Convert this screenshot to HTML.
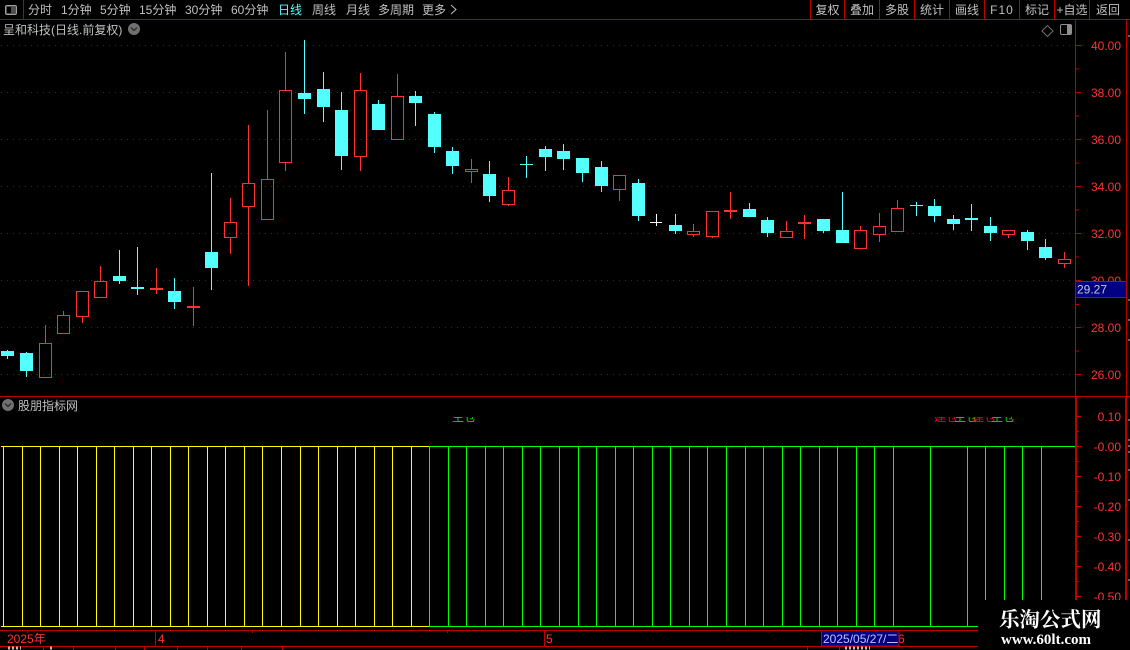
<!DOCTYPE html>
<html><head><meta charset="utf-8"><style>
html,body{margin:0;padding:0;background:#000;width:1130px;height:650px;overflow:hidden}
svg{display:block}
text{font-family:"Liberation Sans","WenQuanYi Zen Hei","Noto Sans CJK SC",sans-serif;font-size:12px}
.m{fill:#c0c0c0}
.a{fill:#ff3232;text-anchor:end}
.c{text-anchor:middle}
</style></head><body>
<svg width="1130" height="650" viewBox="0 0 1130 650" xmlns="http://www.w3.org/2000/svg">
<rect width="1130" height="650" fill="#000"/>
<defs><clipPath id="cl"><rect x="900" y="417" width="130" height="5"/><rect x="440" y="417" width="50" height="5"/></clipPath>
<clipPath id="c30"><rect x="1080" y="260" width="46" height="21"/></clipPath></defs>

<!-- grid -->
<path d="M1 45.5H1075M1 92.5H1075M1 139.5H1075M1 186.5H1075M1 233.5H1075M1 280.5H1075M1 327.5H1075M1 374.5H1075" stroke="#a00000" stroke-width="1" stroke-dasharray="1 5" fill="none" shape-rendering="crispEdges"/>

<!-- frame lines -->
<g stroke="#c00000" fill="none" shape-rendering="crispEdges">
<path d="M0 19.5H1130M23.5 0V19M810.5 0V19M844.5 0V19M879.5 0V19M914.5 0V19M949.5 0V19M984.5 0V19M1019.5 0V19M1054.5 0V19M1089.5 0V19"/>
<path d="M0 396.5H1130M0 630.5H1130M0 646.5H1130"/>
<path d="M1075.5 20V396M1126.5 20V396"/>
<path d="M1075.5 396V600M1076.5 396V600M1125.5 396V600M1126.5 396V600"/>
<path d="M155.5 631V646M544.5 631V646M27.5 631V633M252.5 631V633M447.5 631V633M43.5 647V650M73.5 647V650M115.5 647V650M144.5 647V650M177.5 647V650M207.5 647V650M241.5 647V650M282.5 647V650M807.5 647V650M839.5 647V650"/>
<!-- upper axis ticks -->
<path d="M1076 45.5H1081M1076 92.5H1081M1076 139.5H1081M1076 186.5H1081M1076 233.5H1081M1076 280.5H1081M1076 327.5H1081M1076 374.5H1081M1076 69H1079M1076 116H1079M1076 163H1079M1076 210H1079M1076 257H1079M1076 304.5H1079M1076 351H1079"/>
<!-- lower axis ticks -->
<path d="M1077 416.5H1081M1077 446.5H1081M1077 476.5H1081M1077 506.5H1081M1077 536.5H1081M1077 566.5H1081M1077 596.5H1081M1077 431.5H1079M1077 461.5H1079M1077 491.5H1079M1077 521.5H1079M1077 551.5H1079M1077 581.5H1079"/>
</g>

<!-- red candles -->
<path fill="none" stroke="#ff3232" shape-rendering="crispEdges" d="M39.5 343.5h12v34h-12zM45.5 325V343
M57.5 315.5h12v18h-12zM63.5 311V315
M76.5 291.5h12v25h-12zM82.5 317V323
M94.5 281.5h12v16h-12zM100.5 266V281
M224.5 222.5h12v15h-12zM230.5 198V222M230.5 238V254
M242.5 183.5h12v23h-12zM248.5 125V183M248.5 207V286
M261.5 179.5h12v40h-12zM267.5 110V179
M279.5 90.5h12v72h-12zM285.5 52V90M285.5 163V171
M354.5 90.5h12v66h-12zM360.5 73V90M360.5 157V171
M391.5 96.5h12v43h-12zM397.5 74V96
M465.5 169.5h12v2h-12zM471.5 159V169M471.5 172V183
M502.5 190.5h12v14h-12zM508.5 177V190M508.5 205V206
M613.5 175.5h12v14h-12zM619.5 190V201
M687.5 231.5h12v3h-12zM693.5 224V231M693.5 235V237
M706.5 211.5h12v25h-12zM712.5 237V238
M780.5 231.5h12v6h-12zM786.5 221V231
M854.5 230.5h12v18h-12zM860.5 226V230
M873.5 226.5h12v8h-12zM879.5 213V226M879.5 235V242
M891.5 208.5h12v23h-12zM897.5 200V208
M1002.5 230.5h12v4h-12zM1008.5 235V238
M1058.5 259.5h12v4h-12zM1064.5 252V259M1064.5 264V268
M156.5 268V294M193.5 287V326M730.5 192V219M804.5 215V239"/>
<path fill="#ff3232" shape-rendering="crispEdges" d="M150 288h13v2h-13zM187 306h13v2h-13zM724 210h13v2h-13zM798 222h13v2h-13z"/>

<!-- cyan candles -->
<path fill="none" stroke="#54ffff" shape-rendering="crispEdges" d="M7.5 350V359M26.5 352V377M119.5 250V284M137.5 247V295M174.5 278V309M211.5 173V290M304.5 40V114M323.5 72V122M341.5 92V170M378.5 100V130M415.5 91V126M434.5 112V153M452.5 147V174M489.5 161V202M526.5 156V178M545.5 146V171M563.5 144V170M582.5 158V182M601.5 161V192M638.5 179V221M675.5 214V234M749.5 203V217M767.5 217V237M823.5 219V233M842.5 192V243M916.5 202V216M934.5 199V222M953.5 215V230M971.5 204V231M990.5 217V241M1027.5 230V250M1045.5 239V260"/>
<path fill="#54ffff" shape-rendering="crispEdges" d="M1 351h13v5H1zM20 353h13v18H20zM113 276h13v5h-13zM131 287h13v2h-13zM168 291h13v11h-13zM205 252h13v16h-13zM298 93h13v6h-13zM317 89h13v18h-13zM335 110h13v46h-13zM372 104h13v26h-13zM409 96h13v7h-13zM428 114h13v33h-13zM446 151h13v15h-13zM483 174h13v22h-13zM520 164h13v1h-13zM539 149h13v8h-13zM557 151h13v8h-13zM576 158h13v15h-13zM595 167h13v19h-13zM632 183h13v33h-13zM669 225h13v6h-13zM743 209h13v8h-13zM761 220h13v13h-13zM817 219h13v12h-13zM836 230h13v13h-13zM910 205h13v1h-13zM928 206h13v10h-13zM947 219h13v5h-13zM965 218h13v2h-13zM984 226h13v7h-13zM1021 232h13v9h-13zM1039 247h13v11h-13z"/>

<!-- white doji -->
<path fill="none" stroke="#fff" shape-rendering="crispEdges" d="M656.5 214V226M650 222.5H662"/>

<!-- indicator bars -->
<path fill="none" stroke="#ffff00" shape-rendering="crispEdges" d="M1 446.5H429M1 626.5H429M3.5 446V626M22.5 446V626M40.5 446V626M59.5 446V626M77.5 446V626M96.5 446V626M114.5 446V626M133.5 446V626M151.5 446V626M170.5 446V626M188.5 446V626M207.5 446V626M225.5 446V626M244.5 446V626M262.5 446V626M281.5 446V626M300.5 446V626M318.5 446V626M337.5 446V626M355.5 446V626M374.5 446V626M392.5 446V626M411.5 446V626"/>
<path fill="none" stroke="#00ff00" shape-rendering="crispEdges" d="M429 446.5H1075M429 626.5H978M429.5 446V626M448.5 446V626M466.5 446V626M485.5 446V626M503.5 446V626M522.5 446V626M540.5 446V626M559.5 446V626M578.5 446V626M596.5 446V626M615.5 446V626M633.5 446V626M652.5 446V626M670.5 446V626M689.5 446V626M707.5 446V626M726.5 446V626M745.5 446V626M763.5 446V626M782.5 446V626M800.5 446V626M819.5 446V626M837.5 446V626M856.5 446V626M874.5 446V626M893.5 446V626M930.5 446V626M967.5 446V626M985.5 446V626M1004.5 446V626M1022.5 446V626M1041.5 446V626"/>

<!-- clipped signal labels -->
<g clip-path="url(#cl)">
<text x="452" y="421" fill="#00e000">主仓</text>
<text x="934" y="421" fill="#ff0000">建仓</text>
<text x="954" y="421" fill="#00e000">主仓</text>
<text x="972" y="421" fill="#ff0000">建仓</text>
<text x="991" y="421" fill="#00e000">主仓</text>
</g>

<!-- top bar -->
<text class="m" x="28" y="14">分时</text>
<text class="m" x="61" y="14">1分钟</text>
<text class="m" x="100" y="14">5分钟</text>
<text class="m" x="139" y="14">15分钟</text>
<text class="m" x="185" y="14">30分钟</text>
<text class="m" x="231" y="14">60分钟</text>
<text x="278" y="14" fill="#54ffff">日线</text>
<text class="m" x="312" y="14">周线</text>
<text class="m" x="346" y="14">月线</text>
<text class="m" x="378" y="14">多周期</text>
<text class="m" x="422" y="14">更多</text>
<path d="M451 5l5 4.5-5 4.5" fill="none" stroke="#c0c0c0"/>
<rect x="5.5" y="5.5" width="11" height="9" rx="1.5" fill="#505050" stroke="#a0a0a0"/>
<rect x="7" y="7" width="4" height="6" fill="#000"/>

<text class="m c" x="827.5" y="14">复权</text>
<text class="m c" x="862" y="14">叠加</text>
<text class="m c" x="897" y="14">多股</text>
<text class="m c" x="932" y="14">统计</text>
<text class="m c" x="967" y="14">画线</text>
<text class="m c" x="1002" y="14" letter-spacing="1">F10</text>
<text class="m c" x="1037" y="14">标记</text>
<text class="m c" x="1072" y="14">+自选</text>
<text class="m c" x="1108" y="14">返回</text>

<!-- title -->
<text class="m" x="3" y="34">呈和科技(日线.前复权)</text>
<circle cx="134" cy="29" r="6" fill="#707070"/>
<path d="M131 27.5l3 3 3-3" fill="none" stroke="#222" stroke-width="1.2"/>
<path d="M1047.5 25.5l5.5 5.5-5.5 5.5-5.5-5.5z" fill="none" stroke="#707070"/>
<rect x="1060.5" y="24.5" width="11" height="10" rx="1.5" fill="#000" stroke="#909090"/>
<rect x="1067" y="25" width="4" height="9" fill="#909090"/>

<!-- axis labels -->
<text class="a" x="1121" y="50">40.00</text>
<text class="a" x="1121" y="97">38.00</text>
<text class="a" x="1121" y="144">36.00</text>
<text class="a" x="1121" y="191">34.00</text>
<text class="a" x="1121" y="238">32.00</text>
<text class="a" x="1121" y="285" clip-path="url(#c30)">30.00</text>
<text class="a" x="1121" y="332">28.00</text>
<text class="a" x="1121" y="379">26.00</text>
<rect x="1075.5" y="281.5" width="51" height="16" fill="#000080" stroke="#c00000"/>
<text x="1077" y="293.500" fill="#c8c8c8">29.27</text>

<text class="a" x="1121" y="421">0.10</text>
<text class="a" x="1121" y="451">-0.00</text>
<text class="a" x="1121" y="481">-0.10</text>
<text class="a" x="1121" y="511">-0.20</text>
<text class="a" x="1121" y="541">-0.30</text>
<text class="a" x="1121" y="571">-0.40</text>
<text class="a" x="1121" y="601">-0.50</text>

<!-- white edge marks on far right -->
<path d="M1128 36h2M1128 300h2M1128 320h2M1128 340h2M1128 420h2M1128 440h2M1128 446h2M1128 452h2M1128 470h2M1128 500h2M1128 540h2M1128 580h2" stroke="#c0c0c0" shape-rendering="crispEdges" fill="none"/>

<!-- lower title -->
<circle cx="8" cy="405" r="6" fill="#707070"/>
<path d="M5 403.5l3 3 3-3" fill="none" stroke="#222" stroke-width="1.2"/>
<text class="m" x="18" y="410">股朋指标网</text>

<!-- time axis -->
<text x="7" y="643" fill="#ff3232">2025年</text>
<text x="158" y="643" fill="#ff3232">4</text>
<text x="546" y="643" fill="#ff3232">5</text>
<text x="898" y="643" fill="#ff3232">6</text>
<rect x="821.500" y="630.500" width="77.500" height="15.500" fill="#000080" stroke="#c00000"/>
<text x="823" y="643" fill="#c0c0ff">2025/05/27/二</text>

<!-- bottom sliver -->
<path d="M8 648h13M50 648h2M845 648h25" stroke="#c0c0c0" stroke-width="3" stroke-dasharray="2 2" fill="none" shape-rendering="crispEdges"/>

<!-- watermark -->
<rect x="985" y="600" width="145" height="50" fill="#000"/>
<rect x="978" y="627" width="8" height="23" fill="#000"/>
<text x="999" y="626.500" fill="#fff" style="font-family:'Noto Serif CJK SC','Liberation Serif',serif;font-size:20.500px;font-weight:bold">乐淘公式网</text>
<text x="1001" y="644" fill="#fff" style="font-family:'Liberation Serif',serif;font-size:15px;font-weight:bold">www.60lt.com</text>
</svg>
</body></html>
